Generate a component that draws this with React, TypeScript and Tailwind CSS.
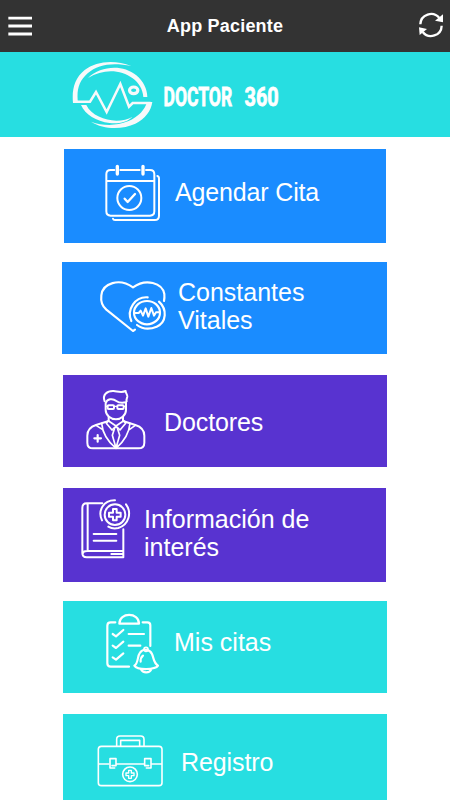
import React from "react";

const stroke = {
  fill: "none",
  stroke: "#fff",
  strokeLinecap: "round",
  strokeLinejoin: "round",
} as const;

function MenuIcon() {
  return (
    <svg width="26" height="24" viewBox="21 39 78 72" className="ml-[7px] shrink-0" aria-hidden="true">
      <path d="M25 51.500h71M25 75h71M25 99h71" stroke="#fff" strokeWidth="8.500" />
    </svg>
  );
}

function RefreshIcon() {
  return (
    <svg width="26" height="26" viewBox="581 36 78 78" className="mr-[6px] -mt-[2px] shrink-0" aria-hidden="true">
      <g fill="none" stroke="#fff" strokeWidth="7">
        <path d="M588 73a32 32 0 0 1 57-19" />
        <path d="M652 77a32 32 0 0 1-57 19" />
      </g>
      <path d="M656 43v24l-24-5z" fill="#fff" />
      <path d="M584 82l24 5-22 18z" fill="#fff" />
    </svg>
  );
}

function Logo() {
  return (
    <svg width="82" height="70" viewBox="12 15 246 210" aria-hidden="true">
      <g fill="#f8f9fa">
        <path d="M190 30C140 10 85 15 50 42C20 66 11 100 15 141H30C25 105 32 75 59 52C90 24 135 19 190 30Z" />
        <path d="M60 66C98 30 163 24 205 58C226 76 237 98 238 123H226C224 100 213 81 194 67C158 40 105 38 60 66Z" />
        <path d="M39 147H55C70 178 110 193 145 194C164 194 180 190 194 182C177 199 150 204 125 201C84 196 52 176 39 147Z" />
        <path d="M253 138H237C231 160 213 182 180 196C145 210 105 210 69 197C108 222 165 220 202 203C232 188 249 165 253 138Z" />
      </g>
      <path
        d="M18 137H66L84 108L116 168L157 84L183 152L194 141H248"
        fill="none"
        stroke="#f8f9fa"
        strokeWidth="7.500"
      />
      <ellipse cx="197" cy="103" rx="12.500" ry="10" fill="none" stroke="#f8f9fa" strokeWidth="9.500" />
    </svg>
  );
}

function Wordmark() {
  return (
    <svg width="120" height="40" viewBox="0 0 120 40" className="ml-[9px]" role="img" aria-label="DOCTOR 360">
      <g
        fill="#fff"
        stroke="#fff"
        strokeWidth="0.800"
        fontFamily="Roboto, 'Liberation Sans', sans-serif"
        fontWeight="700"
        fontSize="26"
      >
        <text transform="translate(0.500 29) scale(0.675 1)">DOCTOR</text>
        <text transform="translate(81.500 29) scale(0.765 1)">360</text>
      </g>
    </svg>
  );
}

function CalendarIcon() {
  return (
    <svg width="57" height="60" viewBox="132 54 171 180" className="shrink-0" aria-hidden="true">
      <g {...stroke} strokeWidth="6">
        <path d="M163 75h-11q-13 0-13 13v111q0 13 13 13h118q13 0 13-13V88q0-13-13-13h-12M181 75h58M139 108h144" />
        <path d="M292 93q5 1 5 8v111q0 13-13 13H165q-5 0-6-4" />
        <circle cx="208" cy="159" r="36" />
        <path d="M194 161l9 10 22-24" strokeWidth="7" />
        <path d="M172 64v23M249 64v23" strokeWidth="10" />
      </g>
    </svg>
  );
}

function HeartIcon() {
  return (
    <svg width="68" height="55" viewBox="117 60 204 165" className="shrink-0" aria-hidden="true">
      <g {...stroke} strokeWidth="6.500">
        <path d="M225 215l-6 4-80-64c-14-12-17-27-15-43 4-37 54-53 95-24 39-28 88-13 94 20q1 10-1 21" />
        <ellipse cx="261" cy="164" rx="39" ry="35" />
        <path d="M263 118c-38-3-64 37-49 71M297 131c25 23 23 62-7 75-21 9-43 7-59-5" />
        <path d="M226 165h10l6-7 7 15 8-22 8 25 9-26 8 23 6-10h12" strokeWidth="6" />
      </g>
    </svg>
  );
}

function DoctorIcon() {
  return (
    <svg width="61" height="63" viewBox="9 12 183 189" className="shrink-0" aria-hidden="true">
      <g {...stroke} strokeWidth="6">
        <path d="M68 52C60 32 76 20 95 21C110 23 120 27 131 21C130 26 137 32 136 38C135 43 132 46 134 52" />
        <path d="M71 78V58C75 44 92 42 103 51C112 58 122 57 132 55V78C132 94 116 106 102 106C87 106 71 94 71 78Z" />
        <rect x="77" y="64" width="19" height="11" rx="3" />
        <rect x="106" y="64" width="19" height="11" rx="3" />
        <path d="M71 67h6M96 67h10M125 67h7" strokeWidth="4" />
        <path d="M80 98v13l-38 12c-19 6-26 16-26 32v21q0 17 17 17h136q18 0 18-17v-21c0-16-8-26-27-32l-37-12V98" />
        <path d="M80 111l22 15 22-15M78 111l-5 7 17 20 12-12 12 12 17-20-5-7" strokeWidth="5" />
        <path d="M59 118c3 34 20 56 43 75 22-19 39-41 42-75M98 132l-7 22 11 38 11-38-7-22M42 124l19 12M160 124l-17 12" strokeWidth="5" />
        <path d="M37 163h20M47 153v20" strokeWidth="6.500" />
      </g>
    </svg>
  );
}

function BookIcon() {
  return (
    <svg width="51" height="61" viewBox="60 42 153 183" className="shrink-0" aria-hidden="true">
      <g {...stroke} strokeWidth="6">
        <path d="M127 58H80q-13 0-13 14v135q0 13 13 13h110V136M83 59v141M190 201H81q-13 0-13 10M101 150h68M101 170h68M154 210h35" />
        <circle cx="165" cy="92" r="31" />
        <path d="M165 49c-34-1-53 31-39 60M198 61c18 25 9 61-23 71q-17 4-30-4" />
        <path d="M159 75h11v11h12v12h-12v11h-11V98h-12V86h12z" />
      </g>
    </svg>
  );
}

function ChecklistIcon() {
  return (
    <svg width="56" height="61" viewBox="135 48 168 183" className="shrink-0" aria-hidden="true">
      <g {...stroke} strokeWidth="6.500">
        <path d="M166 76h-14q-10 0-10 10v113q0 10 10 10h55M248 76h14q9 0 9 9v62M178 80c0-35 59-35 59 0zM206 111h46M206 146h35" />
        <path d="M158 111l10 7 22-19M158 146l10 7 22-19M158 181l10 7 22-19" />
        <path d="M223 206c13-8 8-28 17-39 10-13 29-11 36 4 6 13 4 26 18 35-8 13-62 14-71 0zM243 217c5 12 26 12 31 0M242 194q-1-12 7-18" />
        <circle cx="258" cy="157" r="6" strokeWidth="5" />
      </g>
    </svg>
  );
}

function FirstAidIcon() {
  return (
    <svg width="68" height="54" viewBox="108 78 204 162" className="shrink-0" aria-hidden="true">
      <g {...stroke} strokeWidth="4.800">
        <rect x="115" y="115" width="191" height="118" rx="9" />
        <path d="M170 114V94q0-10 10-10h62q10 0 10 10v20M182 114V97h57v17" />
        <path d="M115 168h33M168 168h84M273 168h33" strokeLinecap="butt" strokeWidth="5" />
        <path d="M164 180h-14v-28h18v21h-12M259 180h14v-28h-19v21h12" />
        <circle cx="210" cy="199" r="22" />
        <path d="M206 187h8v8h8v8h-8v8h-8v-8h-8v-8h8z" strokeWidth="4" />
      </g>
    </svg>
  );
}

interface TileProps {
  icon: React.ReactNode;
  lines: string[];
  tile: string;
  label: string;
}

function Tile({ icon, lines, tile, label }: TileProps) {
  return (
    <button type="button" className={`flex shrink-0 items-start text-left ${tile}`}>
      {icon}
      <span className={`text-[25px] leading-[28px] whitespace-nowrap text-white ${label}`}>
        {lines.map((line) => (
          <span key={line} className="block">{line}</span>
        ))}
      </span>
    </button>
  );
}

const tiles: TileProps[] = [
  {
    icon: <CalendarIcon />,
    lines: ["Agendar Cita"],
    tile: "ml-[64px] h-[94px] w-[322px] bg-[#1a8cff] pt-[14px] pl-[40px]",
    label: "mt-[15px] ml-[14px] tracking-[-0.15px]",
  },
  {
    icon: <HeartIcon />,
    lines: ["Constantes", "Vitales"],
    tile: "mt-[19px] ml-[62px] h-[92px] w-[325px] bg-[#1a8cff] pt-[16px] pl-[37px]",
    label: "ml-[11px]",
  },
  {
    icon: <DoctorIcon />,
    lines: ["Doctores"],
    tile: "mt-[21px] ml-[63px] h-[92px] w-[324px] bg-[#5833d0] pt-[13px] pl-[22px]",
    label: "mt-[20px] ml-[18px] tracking-[-0.1px]",
  },
  {
    icon: <BookIcon />,
    lines: ["Información de", "interés"],
    tile: "mt-[21px] ml-[63px] h-[94px] w-[323px] bg-[#5833d0] pt-[10px] pl-[17px]",
    label: "mt-[7px] ml-[13px]",
  },
  {
    icon: <ChecklistIcon />,
    lines: ["Mis citas"],
    tile: "mt-[19px] ml-[63px] h-[92px] w-[324px] bg-[#27dee1] pt-[12px] pl-[42px]",
    label: "mt-[15px] ml-[13px]",
  },
  {
    icon: <FirstAidIcon />,
    lines: ["Registro"],
    tile: "mt-[21px] ml-[63px] h-[94px] w-[324px] bg-[#27dee1] pt-[20px] pl-[33px]",
    label: "mt-[14px] ml-[17px] tracking-[-0.1px]",
  },
];

export default function App() {
  return (
    <div className="flex h-[800px] w-[450px] flex-col overflow-hidden bg-white font-['Liberation_Sans',Arial,sans-serif]">
      <header className="flex h-[52px] shrink-0 items-center justify-between bg-[#333333]">
        <MenuIcon />
        <h1 className="-ml-px text-[18px] leading-[24px] font-bold tracking-[0.2px] text-white">App Paciente</h1>
        <RefreshIcon />
      </header>
      <div className="flex h-[85px] shrink-0 items-start bg-[#27dee1] pt-[9px] pl-[72px]">
        <Logo />
        <div className="mt-[16px]">
          <Wordmark />
        </div>
      </div>
      <main className="flex flex-col pt-[12px]">
        {tiles.map((t) => (
          <Tile key={t.lines[0]} {...t} />
        ))}
      </main>
    </div>
  );
}
